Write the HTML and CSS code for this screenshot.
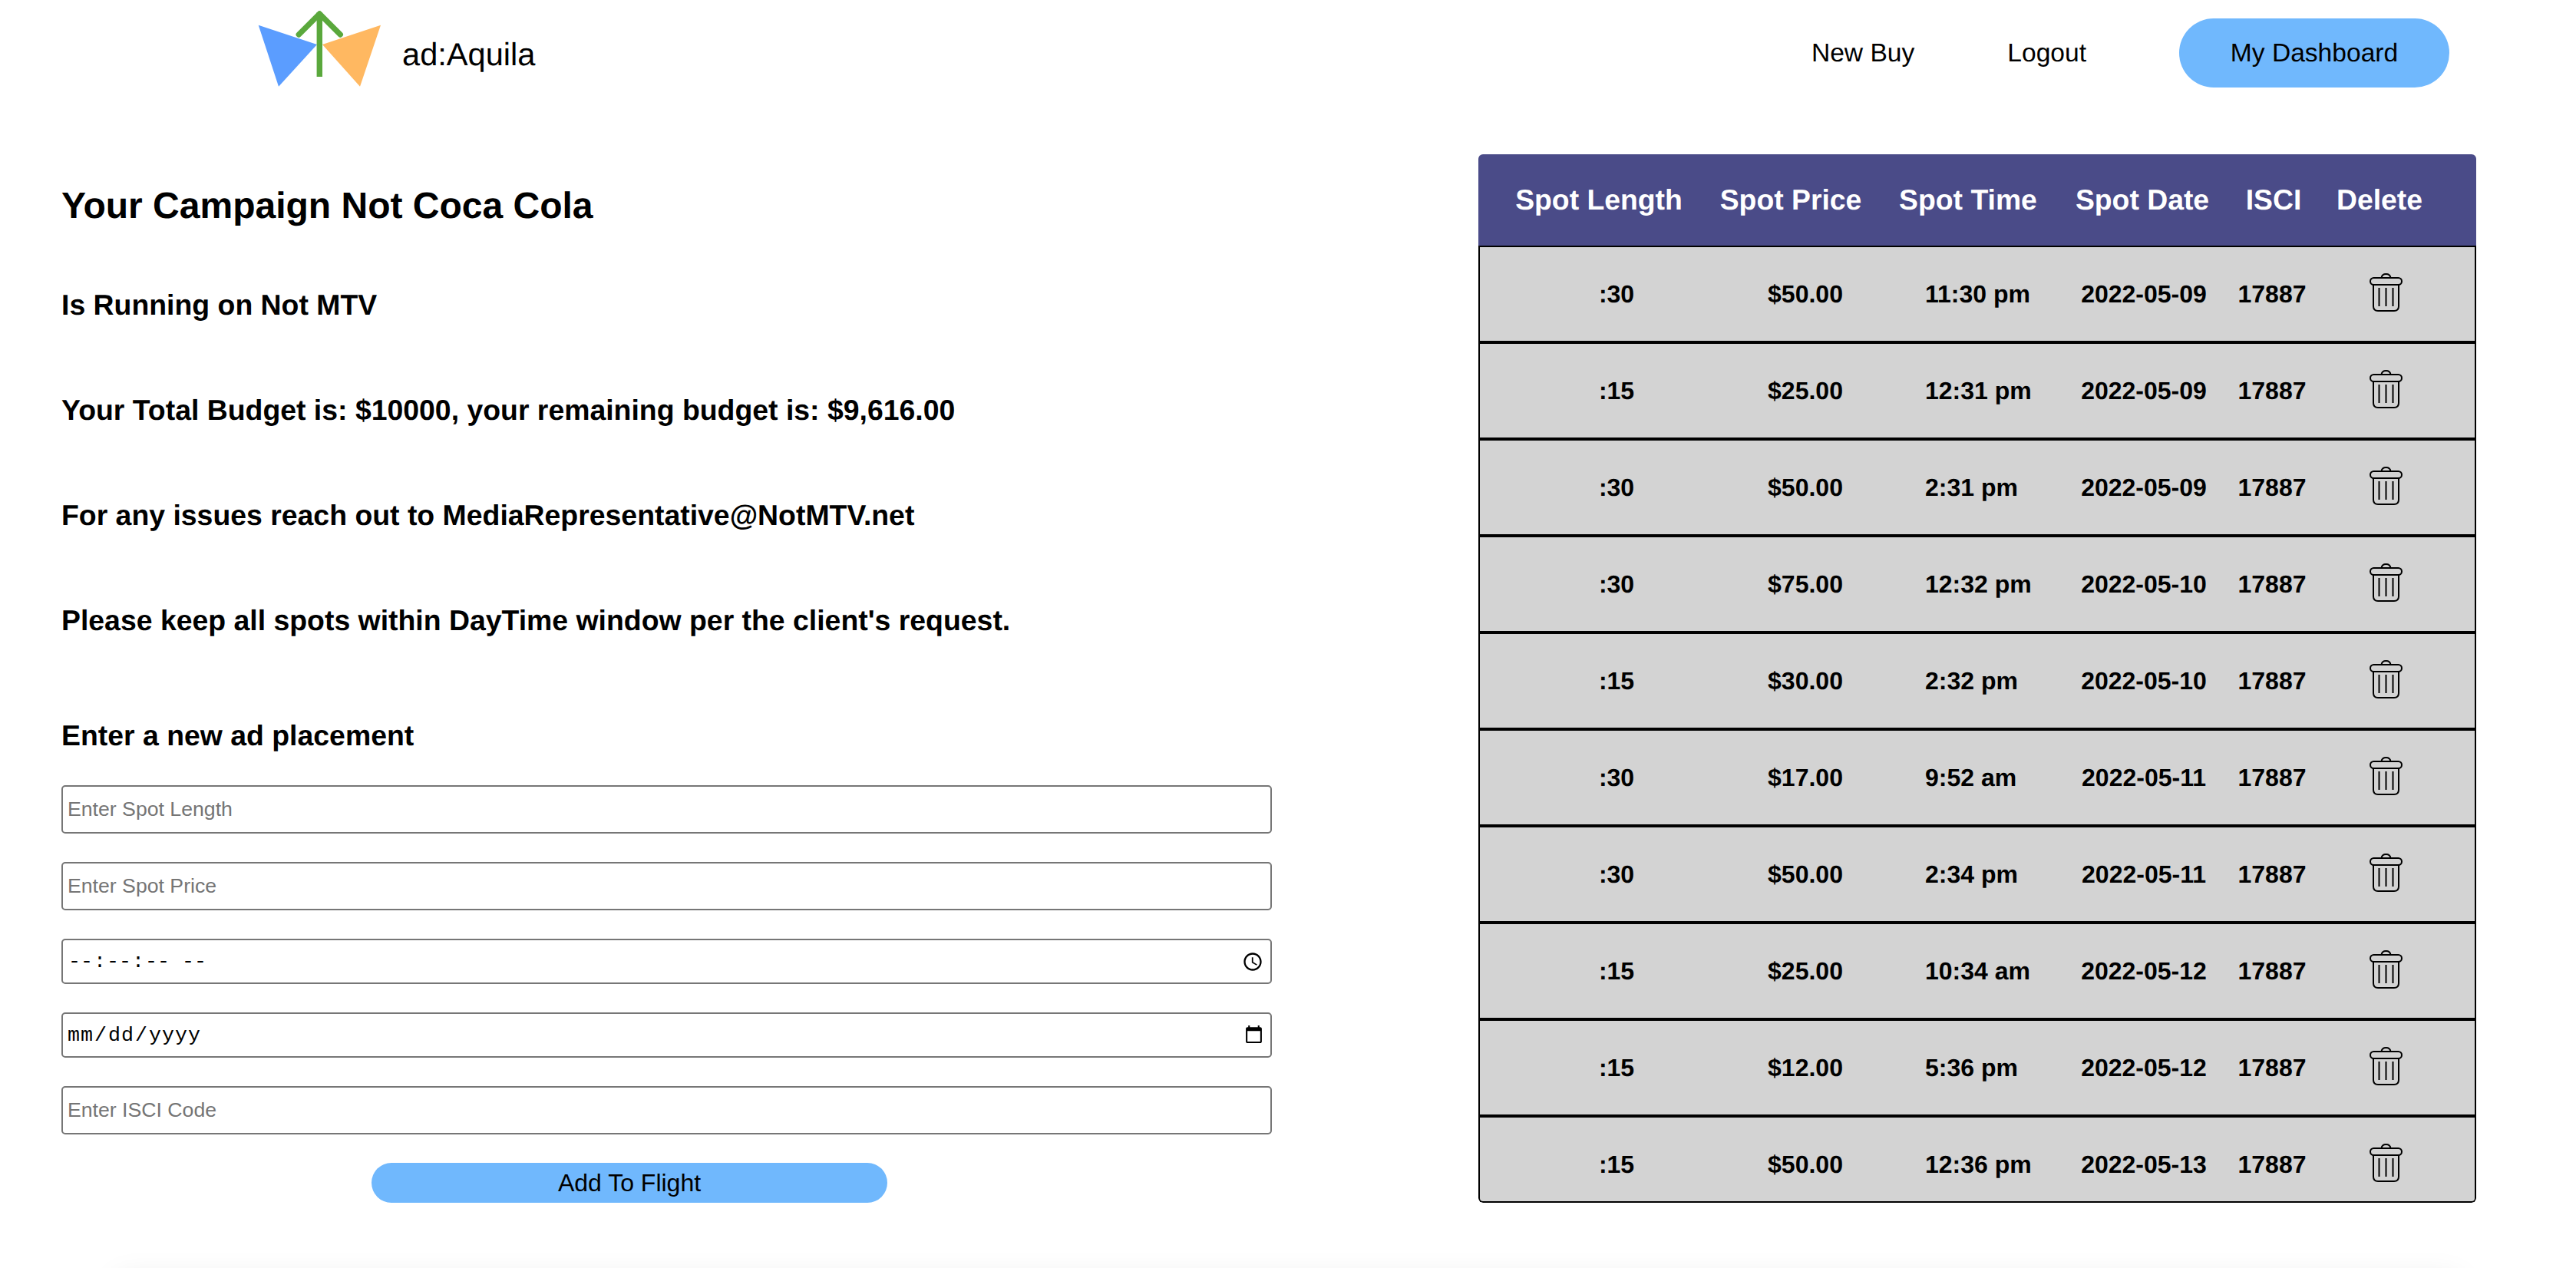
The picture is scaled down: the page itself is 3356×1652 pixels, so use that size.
FILE: index.html
```html
<!DOCTYPE html>
<html lang="en">
<head>
    <meta charset="UTF-8">
    <meta name="viewport" content="width=device-width, initial-scale=1.0">
    <title>ad:Aquila - Flight</title>
    <link rel="stylesheet" href="styles.css">
</head>
<body>
    <header class="navbar">
        <div class="brand">
            <svg class="brand-logo" viewBox="0 0 160 100" width="160" height="100">
                <polygon points="0.7,19.7 77,45 27,99.7" fill="#5b9dff"/>
                <polygon points="160,19.7 84,45 133,99.7" fill="#ffb861"/>
                <path d="M80.3 3V87" stroke="#5aa83c" stroke-width="7.4" fill="none"/>
                <path d="M53.3 32L80.3 5L107.3 32" stroke="#5aa83c" stroke-width="7.4" stroke-linecap="round" stroke-linejoin="round" fill="none"/>
            </svg>
            <span class="brand-name">ad:Aquila</span>
        </div>
        <nav class="nav-links">
            <a class="nav-link">New Buy</a>
            <a class="nav-link">Logout</a>
            <a class="nav-pill">My Dashboard</a>
        </nav>
    </header>

    <main class="flight-page">
        <section class="campaign">
            <h1 class="campaign-title">Your Campaign Not Coca Cola</h1>
            <h2 class="campaign-line">Is Running on Not MTV</h2>
            <h2 class="campaign-line">Your Total Budget is: $10000, your remaining budget is: $9,616.00</h2>
            <h2 class="campaign-line">For any issues reach out to MediaRepresentative@NotMTV.net</h2>
            <h2 class="campaign-line">Please keep all spots within DayTime window per the client's request.</h2>
            <h2 class="form-title">Enter a new ad placement</h2>
            <form class="placement-form">
                <input class="field" type="text" placeholder="Enter Spot Length">
                <input class="field" type="text" placeholder="Enter Spot Price">
                <input class="field field-native field-time" type="time" step="1">
                <input class="field field-native" type="date">
                <input class="field" type="text" placeholder="Enter ISCI Code">
                <button class="add-button" type="button">Add To Flight</button>
            </form>
        </section>

        <section class="spots">
            <div class="spots-head">
                <span>Spot Length</span>
                <span>Spot Price</span>
                <span>Spot Time</span>
                <span>Spot Date</span>
                <span>ISCI</span>
                <span>Delete</span>
            </div>
            <div class="spots-body" id="spots-body"></div>
        </section>
    </main>

    <div class="page-foot"></div>

    <template id="trash-icon">
        <svg class="trash" viewBox="0 0 43 50" width="43" height="50" fill="none" stroke="#000" stroke-width="2">
            <path d="M15.5 6C16 2.6 18.4 1 21.5 1S27 2.6 27.5 6"/>
            <rect x="1" y="6" width="41" height="9" rx="4.5"/>
            <path d="M5 15V43C5 46.8 7.2 49 11 49H32C35.8 49 38 46.8 38 43V15"/>
            <path d="M12.5 19V43M21.5 19V43M30.5 19V43"/>
        </svg>
    </template>

    <script>
        var spots = [
            [':30', '$50.00', '11:30 pm', '2022-05-09'],
            [':15', '$25.00', '12:31 pm', '2022-05-09'],
            [':30', '$50.00', '2:31 pm', '2022-05-09'],
            [':30', '$75.00', '12:32 pm', '2022-05-10'],
            [':15', '$30.00', '2:32 pm', '2022-05-10'],
            [':30', '$17.00', '9:52 am', '2022-05-11'],
            [':30', '$50.00', '2:34 pm', '2022-05-11'],
            [':15', '$25.00', '10:34 am', '2022-05-12'],
            [':15', '$12.00', '5:36 pm', '2022-05-12'],
            [':15', '$50.00', '12:36 pm', '2022-05-13']
        ];
        var body = document.getElementById('spots-body');
        var icon = document.getElementById('trash-icon');
        spots.forEach(function (spot) {
            var row = document.createElement('div');
            row.className = 'spot-row';
            spot.concat('17887').forEach(function (value) {
                var cell = document.createElement('span');
                cell.textContent = value;
                row.appendChild(cell);
            });
            var del = document.createElement('span');
            del.className = 'spot-delete';
            del.appendChild(icon.content.cloneNode(true));
            row.appendChild(del);
            body.appendChild(row);
        });
    </script>
</body>
</html>
```

FILE: styles.css
```css
body {
    margin: 0;
    height: 100vh;
    overflow: hidden;
    background: white;
    color: black;
    font-family: "Liberation Sans", Arial, sans-serif;
    text-rendering: geometricPrecision;
}

.navbar {
    display: flex;
    justify-content: space-between;
    height: 128px;
    padding: 13px 165px 0 336px;
    box-sizing: border-box;
}

.brand {
    display: flex;
    align-items: flex-start;
    gap: 28px;
}

.brand-logo {
    display: block;
}

.brand-name {
    font-size: 41.6px;
    line-height: 48px;
    margin-top: 34px;
}

.nav-links {
    display: flex;
    align-items: center;
    gap: 121px;
    height: 90px;
    margin-top: 11px;
}

.nav-link {
    padding-top: 1px;
    font-size: 33.6px;
}

.nav-pill {
    width: 352px;
    height: 90px;
    border-radius: 45px;
    background: #70b8fd;
    font-size: 33.6px;
    line-height: 92px;
    text-align: center;
}

.flight-page {
    display: flex;
    gap: 269px;
    padding-left: 80px;
}

.campaign {
    width: 1577px;
}

.campaign-title {
    margin: 113px 0 0;
    font-size: 48px;
    line-height: 56px;
}

.campaign-line {
    margin: 0 0 93px;
    font-size: 37.4px;
    line-height: 44px;
}

.campaign-title + .campaign-line {
    margin-top: 78px;
}

.form-title {
    margin: 106px 0 43px;
    font-size: 37.4px;
    line-height: 44px;
}

.placement-form {
    display: flex;
    flex-direction: column;
    gap: 37px;
}

.field {
    box-sizing: border-box;
    width: 100%;
    height: 63px;
    padding: 2px 6px;
    border: 2px solid #767676;
    border-radius: 5px;
    background: white;
    font-family: "Liberation Sans", Arial, sans-serif;
    font-size: 26.67px;
}

.field-native {
    height: 59px;
    padding-left: 5px;
    font-family: "Liberation Mono", "Courier New", monospace;
    letter-spacing: 1px;
}

.field-time {
    padding-left: 6px;
    letter-spacing: 1.5px;
}

.field-time::-webkit-datetime-edit-ampm-field {
    margin-left: 6px;
}

.add-button {
    width: 672px;
    height: 52px;
    margin-left: 404px;
    border: none;
    border-radius: 26px;
    background: #70b8fd;
    color: black;
    font-family: inherit;
    font-size: 32px;
}

.spots {
    width: 1300px;
    height: 1366px;
    margin-top: 73px;
    border-radius: 6px;
    overflow: hidden;
}

.spots-head {
    display: grid;
    grid-template-columns: 314px 186px 276px 178px 164px 110px;
    align-items: center;
    height: 119px;
    padding-bottom: 1px;
    box-sizing: border-box;
    background: #4a4b88;
    color: white;
    font-size: 37.33px;
    font-weight: bold;
    text-align: center;
    white-space: nowrap;
}

.spots-body {
    box-sizing: border-box;
    height: 1247px;
    border-left: 2px solid black;
    border-right: 2px solid black;
    border-bottom: 2px solid black;
    border-bottom-left-radius: 6px;
    border-bottom-right-radius: 6px;
    background: #d3d3d3;
    overflow: hidden;
}

.spot-row {
    display: grid;
    grid-template-columns: 300px 192px 254px 182px 152px 144px;
    align-items: center;
    box-sizing: border-box;
    height: 126px;
    padding: 1px 0 0 28px;
    border-top: 2px solid black;
    border-bottom: 2px solid black;
    font-size: 32px;
    font-weight: bold;
    text-align: center;
    white-space: nowrap;
}

/* time column is left aligned, the others are centered */
.spot-row span:nth-child(3) {
    padding-left: 60px;
    text-align: left;
}

.spot-delete {
    display: flex;
    justify-content: center;
}

.trash {
    display: block;
    margin-top: -5px;
}

.page-foot {
    width: 3050px;
    height: 60px;
    margin: 100px auto 0;
    box-shadow: 0 0 40px rgba(0, 0, 0, 0.1);
}
```
